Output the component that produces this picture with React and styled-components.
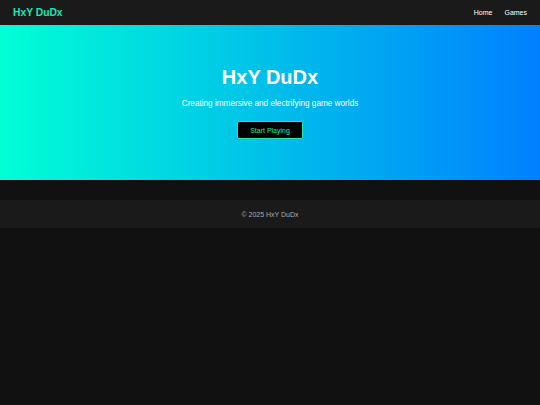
import React from "react";
import styled, { createGlobalStyle } from "styled-components";

const GlobalStyle = createGlobalStyle`
  html, body {
    margin: 0;
    padding: 0;
    background-color: #111111;
    font-family: "Liberation Sans", Arial, sans-serif;
    color: #ffffff;
  }
`;

const Header = styled.header`
  display: flex;
  align-items: center;
  justify-content: space-between;
  height: 25px;
  padding: 0 13px;
  background-color: #1a1a1a;
`;

const Logo = styled.div`
  color: #1de9b6;
  font-size: 10.3px;
  font-weight: 700;
`;

const Nav = styled.nav`
  display: flex;
  gap: 12px;
`;

const NavLink = styled.a`
  color: #ffffff;
  font-size: 7px;
  text-decoration: none;
`;

const Hero = styled.section`
  display: flex;
  flex-direction: column;
  align-items: center;
  padding: 40px 20px 41px;
  background: linear-gradient(90deg, #00ffd5 0%, #0080ff 100%);
  box-shadow: 0 1px 1px rgba(0, 0, 0, 0.4);
`;

const Title = styled.h1`
  margin: 0 0 9px;
  font-size: 20px;
  line-height: 24px;
  font-weight: 700;
`;

const Subtitle = styled.p`
  margin: 0 0 12px;
  font-size: 8.2px;
  line-height: 11px;
`;

const PlayButton = styled.button`
  height: 18px;
  padding: 0 12px;
  background-color: #000000;
  border: 1px solid #1de9b6;
  border-radius: 2px;
  color: #1de9b6;
  font-family: inherit;
  font-size: 7px;
  cursor: pointer;
`;

const Footer = styled.footer`
  display: flex;
  align-items: center;
  justify-content: center;
  height: 28px;
  margin-top: 20px;
  background-color: #1a1a1a;
  color: #aaaaaa;
  font-size: 7px;
`;

const App = () => {
  return (
    <>
      <GlobalStyle />
      <Header>
        <Logo>HxY DuDx</Logo>
        <Nav>
          <NavLink href="#">Home</NavLink>
          <NavLink href="#">Games</NavLink>
        </Nav>
      </Header>
      <Hero>
        <Title>HxY DuDx</Title>
        <Subtitle>Creating immersive and electrifying game worlds</Subtitle>
        <PlayButton>Start Playing</PlayButton>
      </Hero>
      <Footer>© 2025 HxY DuDx</Footer>
    </>
  );
};

export default App;
